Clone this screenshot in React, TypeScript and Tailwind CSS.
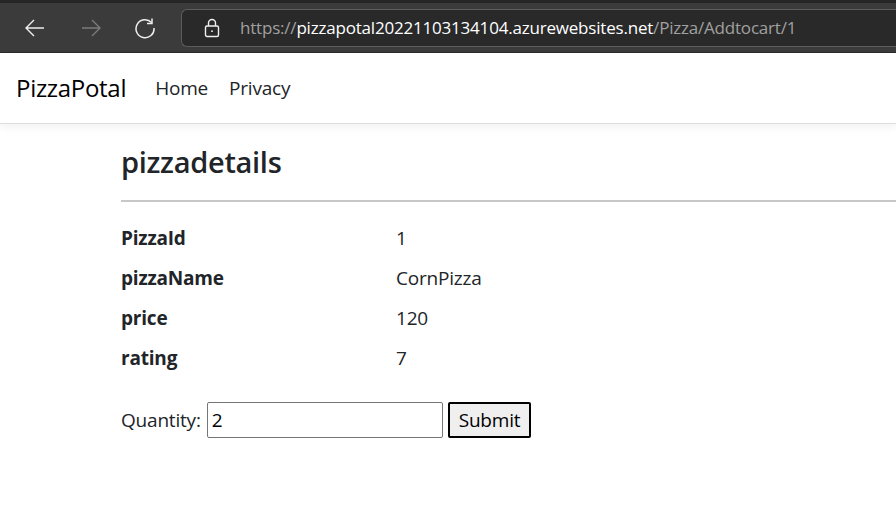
import React from "react";

const font = { fontFamily: '"Segoe UI", "Open Sans", "Noto Sans", sans-serif' };

function BrowserBar() {
  return (
    <div className="h-[53px] bg-[#3b3b3b] border-t-[3px] border-[#262626] border-b border-b-[#2a2a2a] flex items-center">
      <div className="flex items-center">
        <svg className="ml-[24px]" width="22" height="22" viewBox="0 0 22 22" fill="none" stroke="#ededed" strokeWidth="1.4">
          <path d="M20 11H2M10 3l-8 8 8 8" />
        </svg>
        <svg className="ml-[34px]" width="22" height="22" viewBox="0 0 22 22" fill="none" stroke="#7b7b7b" strokeWidth="1.4">
          <path d="M2 11h18M12 3l8 8-8 8" />
        </svg>
        <svg className="ml-[32px]" width="22" height="22" viewBox="0 0 22 22" fill="none" stroke="#ededed" strokeWidth="1.5">
          <path d="M17.5 5.5A9 9 0 1 0 20 11" />
          <path d="M18 1.5v5h-5" />
        </svg>
      </div>
      <div className="ml-[25px] flex-1 h-[38px] bg-[#292929] border border-[#5c5c5c] rounded-l-[6px] border-r-0 flex items-center">
        <svg className="ml-[22px]" width="16" height="20" viewBox="0 0 16 20" fill="none" stroke="#f0f0f0" strokeWidth="1.4">
          <rect x="1.5" y="8" width="13" height="10.5" rx="1.5" />
          <path d="M4.5 8V5a3.5 3.5 0 0 1 7 0v3" />
          <circle cx="8" cy="13.2" r="0.9" fill="#f0f0f0" stroke="none" />
        </svg>
        <div className="ml-[20px] text-[17px] whitespace-nowrap tracking-[-0.2px]" style={font}>
          <span className="text-[#a0a0a0]">https://</span>
          <span className="text-white">pizzapotal20221103134104.azurewebsites.net</span>
          <span className="text-[#a0a0a0]">/Pizza/Addtocart/1</span>
        </div>
      </div>
    </div>
  );
}

function Row({ label, value }: { label: string; value: string }) {
  return (
    <div className="flex h-[40px] items-start">
      <div className="w-[275px] font-bold leading-[30px]">{label}</div>
      <div className="leading-[30px]">{value}</div>
    </div>
  );
}

export default function App() {
  return (
    <div className="w-[896px] h-[521px] overflow-hidden bg-white text-[#212529]" style={font}>
      <BrowserBar />
      <nav className="h-[71px] border-b border-[#dedede] shadow-[0_4px_8px_rgba(0,0,0,0.05)] flex items-center">
        <span className="ml-[16px] text-[24px] text-black tracking-[-0.3px]">PizzaPotal</span>
        <span className="ml-[29px] text-[19px] tracking-[-0.2px]">Home</span>
        <span className="ml-[21px] text-[19px] tracking-[-0.2px]">Privacy</span>
      </nav>
      <main className="pl-[121px] pt-[20px] text-[19px]">
        <h1 className="text-[29px] font-semibold leading-[36px] tracking-[-0.3px]">pizzadetails</h1>
        <div className="mt-[20px] h-[2px] bg-[#c7c7c7]" />
        <div className="mt-[21px] tracking-[-0.2px]">
          <Row label="PizzaId" value="1" />
          <Row label="pizzaName" value="CornPizza" />
          <Row label="price" value="120" />
          <Row label="rating" value="7" />
        </div>
        <div className="mt-[19px] flex items-center tracking-[-0.2px]">
          <span>Quantity:</span>
          <input
            className="ml-[6px] w-[236px] h-[36px] border border-[#767676] rounded-[2px] px-[4px] text-[19px] text-black outline-none"
            defaultValue="2"
            style={font}
          />
          <button
            className="ml-[5px] h-[36px] px-[9px] bg-[#efefef] border-2 border-black rounded-[2px] text-[19px] text-black"
            style={font}
          >
            Submit
          </button>
        </div>
      </main>
    </div>
  );
}
